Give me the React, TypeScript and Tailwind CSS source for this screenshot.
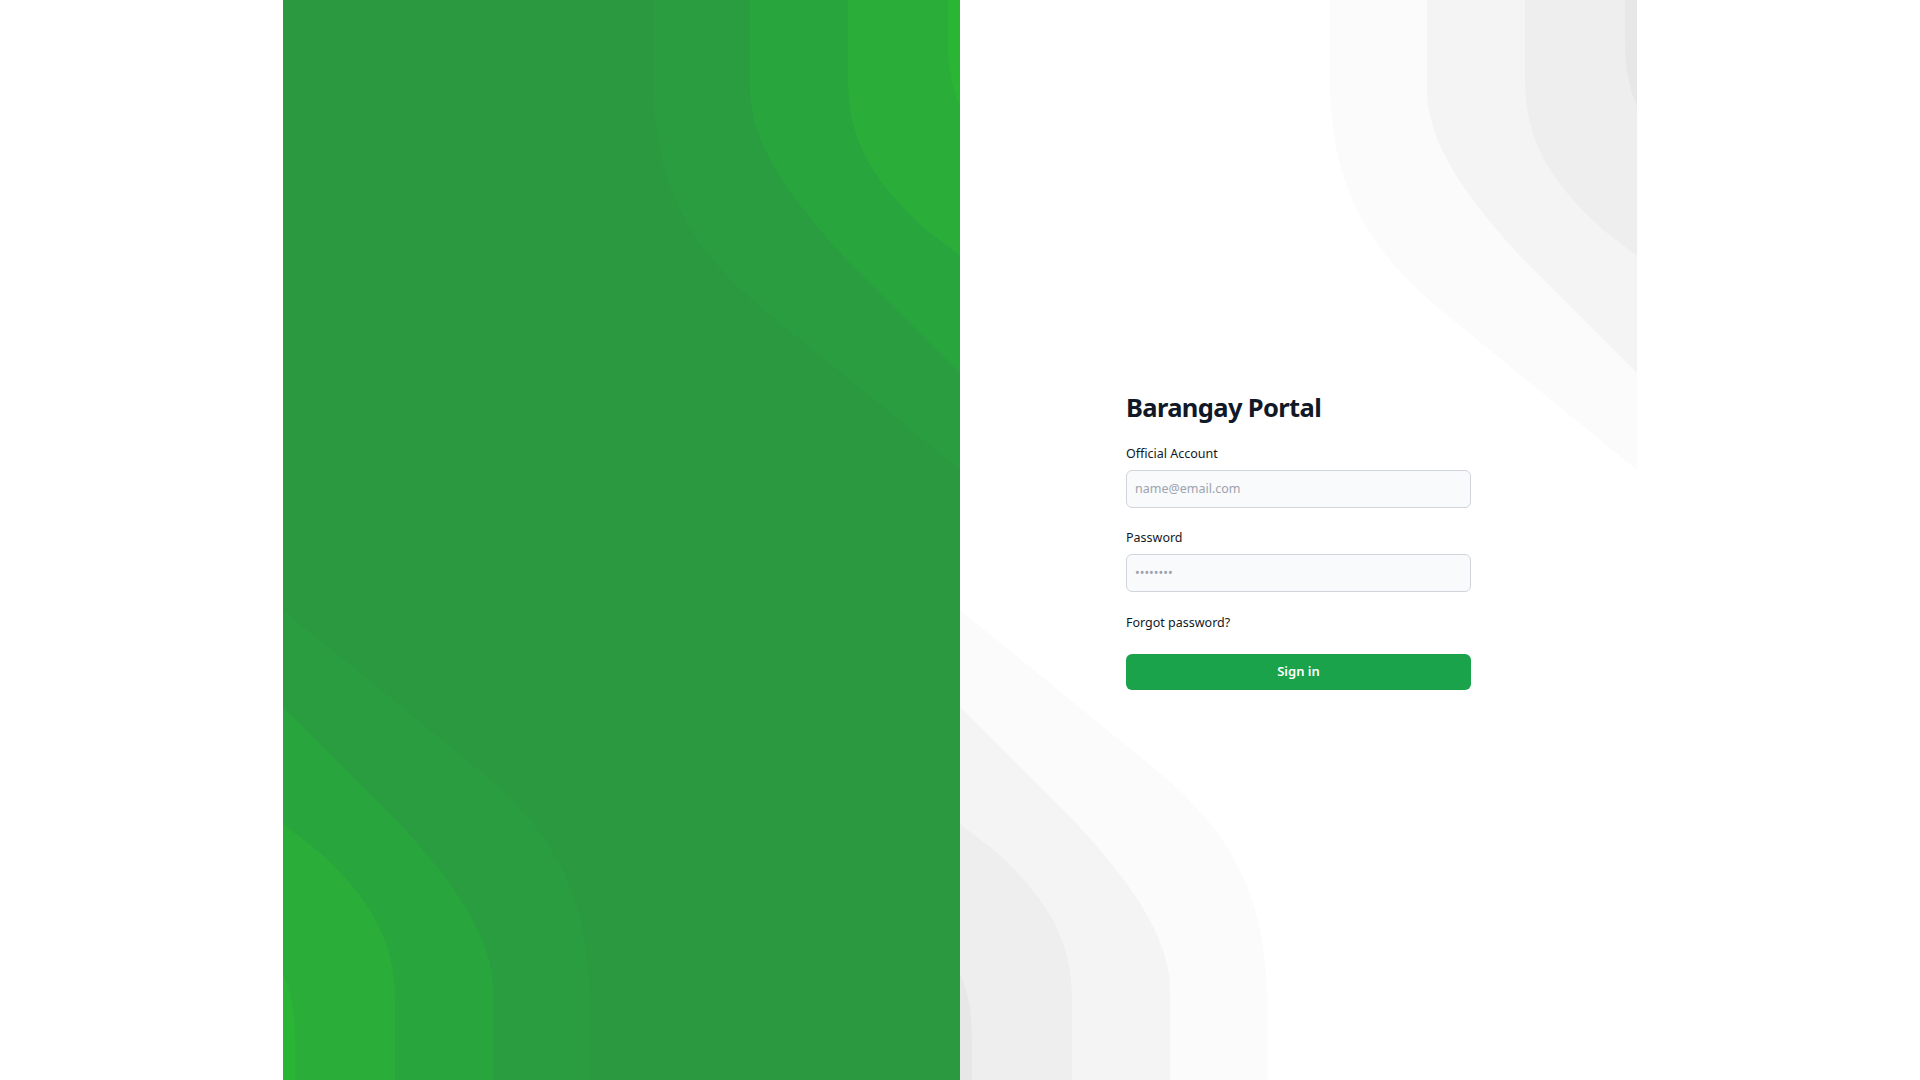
import React from "react";

const BANDS = [
  "M370,-10 L370,80 C370,200 420,262 493,320 L900,652 L900,-10 Z",
  "M467,-10 L467,90 C467,150 520,212 560,256 L900,596 L900,-10 Z",
  "M565,-10 L565,80 C565,140 590,182 643,230 L900,426 L900,-10 Z",
  "M665,-10 L665,40 C665,80 672,100 690,132 L900,482 L900,-10 Z",
];

function Waves({ colors }: { colors: string[] }) {
  return (
    <svg
      className="absolute inset-0 h-full w-full"
      viewBox="0 0 677 1080"
      preserveAspectRatio="none"
      aria-hidden="true"
    >
      <g>
        {BANDS.map((d, i) => (
          <path key={i} d={d} fill={colors[i]} />
        ))}
      </g>
      <g transform="rotate(180 338.5 540)">
        {BANDS.map((d, i) => (
          <path key={i} d={d} fill={colors[i]} />
        ))}
      </g>
    </svg>
  );
}

export default function App() {
  return (
    <div
      className="flex min-h-screen w-full justify-center bg-white"
      style={{ fontFamily: '"Noto Sans", "Open Sans", sans-serif' }}
    >
      <div className="grid h-[1080px] w-[1354px] grid-cols-2">
        <div className="relative overflow-hidden bg-[#2a993f]">
          <Waves colors={["#2a9d40", "#29a53d", "#2aad39", "#2bb535"]} />
        </div>
        <div className="relative overflow-hidden bg-white">
          <Waves colors={["#fbfbfb", "#f4f4f4", "#eeeeee", "#e7e7e7"]} />
          <div className="relative flex h-full items-center justify-center">
            <form className="flex w-[345px] flex-col" onSubmit={(e) => e.preventDefault()}>
              <h1 className="text-[25.5px] font-bold leading-[32px] tracking-tight text-[#111827]">
                Barangay Portal
              </h1>
              <label className="mt-[21px] mb-[6px] text-[12.5px] leading-5 text-[#111827]">
                Official Account
              </label>
              <input
                type="email"
                placeholder="name@email.com"
                className="h-[38px] w-full rounded-md border border-[#d1d5db] bg-[#f9fafb] px-2 text-[12.5px] text-[#111827] outline-none placeholder:text-[#9ca3af]"
              />
              <label className="mt-5 mb-[6px] text-[12.5px] leading-5 text-[#111827]">
                Password
              </label>
              <input
                type="password"
                placeholder="••••••••"
                className="h-[38px] w-full rounded-md border border-[#d1d5db] bg-[#f9fafb] px-2 text-[12.5px] text-[#111827] outline-none placeholder:text-[#9ca3af]"
              />
              <div className="mt-[21px] text-[12.5px] leading-5 text-[#111827]">
                <a href="#" className="text-[#111827]">
                  Forgot password?
                </a>
              </div>
              <button
                type="submit"
                className="mt-[21px] h-9 w-full rounded-md bg-[#1aa34a] text-[13px] font-semibold text-white"
              >
                Sign in
              </button>
            </form>
          </div>
        </div>
      </div>
    </div>
  );
}
